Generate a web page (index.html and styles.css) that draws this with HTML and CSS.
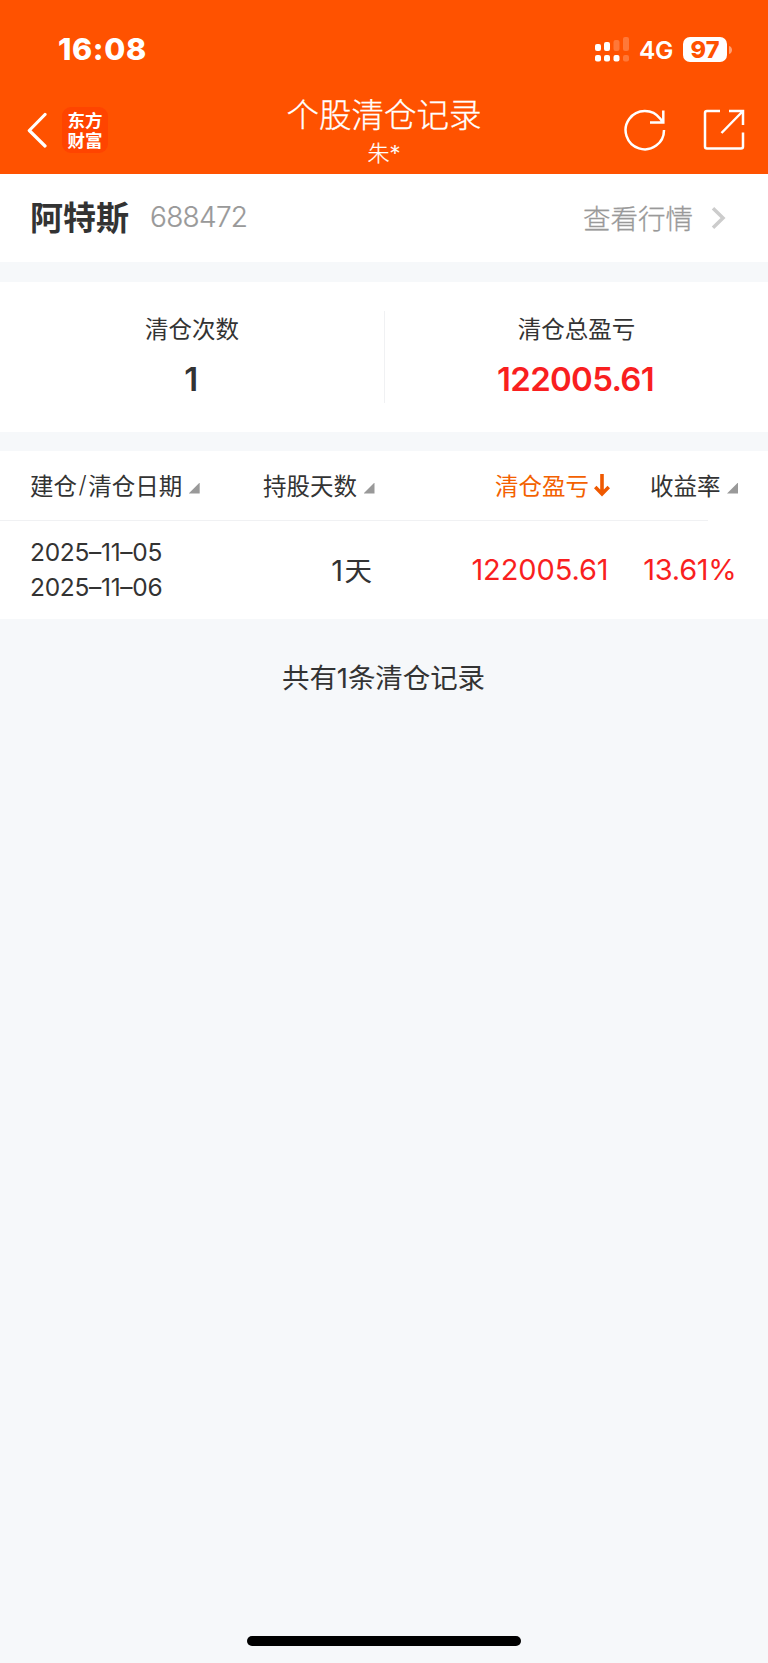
FILE: index.html
```html
<!DOCTYPE html>
<html lang="zh-CN">
<head>
<meta charset="utf-8">
<title>个股清仓记录</title>
<link rel="stylesheet" href="styles.css">
</head>
<body>
<header class="header">
  <div class="status">
    <span class="time">16:08</span>
    <div class="status-right">
      <svg class="signal" width="34" height="25" viewBox="0 0 34 25" fill="#fff">
        <rect x="0" y="7" width="6" height="7" rx="2"/><rect x="9" y="5" width="6" height="9" rx="2"/>
        <rect x="18.500" y="3" width="6" height="11" rx="2" opacity=".22"/><rect x="28" y="0" width="6" height="14" rx="2" opacity=".22"/>
        <rect x="0" y="18" width="6" height="6.500" rx="2"/><rect x="9" y="18" width="6" height="6.500" rx="2"/>
        <rect x="18.500" y="18" width="6" height="6.500" rx="2"/><rect x="28" y="18" width="6" height="6.500" rx="2" opacity=".22"/>
      </svg>
      <span class="network">4G</span>
      <span class="battery">97</span>
      <svg class="battery-cap" width="3" height="8" viewBox="0 0 3 8"><path d="M0 0C4 1 4 7 0 8Z" fill="#fff" opacity=".45"/></svg>
    </div>
  </div>
  <nav class="nav">
    <div class="nav-side">
      <svg width="22" height="36" viewBox="0 0 22 36" fill="none" stroke="#fff" stroke-width="3.200" stroke-linecap="round" stroke-linejoin="round"><path d="M18 2.500 2.300 18.500l15.700 15.500"/></svg>
      <div class="logo"><span>东方</span><span>财富</span></div>
    </div>
    <div class="titles">
      <h1 class="title">个股清仓记录</h1>
      <p class="subtitle">朱*</p>
    </div>
    <div class="nav-side nav-actions">
      <svg width="42" height="42" viewBox="0 0 42 42" fill="none" stroke="#fff" stroke-width="2.500"><path d="M40 21A19.200 19.200 0 1 1 36.300 9.800L39 13.500M39.300 1.500V13.500H26"/></svg>
      <svg width="42" height="42" viewBox="0 0 42 42" fill="none" stroke="#fff" stroke-width="2.500"><path d="M17 2H4Q2 2 2 4V37.500Q2 39.500 4 39.500H38Q40 39.500 40 37.500V23.500M26 2H40V16M40 2 18.500 24"/></svg>
    </div>
  </nav>
</header>
<section class="stock">
  <h2 class="stock-name">阿特斯</h2>
  <span class="stock-code">688472</span>
  <span class="quote-link">查看行情</span>
  <svg width="15" height="22" viewBox="0 0 15 22" fill="none" stroke="#ccc" stroke-width="3.500"><path d="M2 1.300 12 11 2 20.700"/></svg>
</section>
<section class="stats">
  <div class="stat"><span class="stat-label">清仓次数</span><strong class="stat-value">1</strong></div>
  <div class="stat stat-right"><span class="stat-label">清仓总盈亏</span><strong class="stat-value rise">122005.61</strong></div>
</section>
<section class="table">
  <div class="thead">
    <span class="th c1">建仓<span class="slash">/</span>清仓日期<i class="sort"></i></span>
    <span class="th c2">持股天数<i class="sort"></i></span>
    <span class="th c3 active">清仓盈亏<svg class="down" width="16" height="23" viewBox="0 0 16 23" fill="none" stroke="#ef5900" stroke-width="3.600"><path d="M8 0V20M1.200 13 8 20 14.800 13"/></svg></span>
    <span class="th c4">收益率<i class="sort"></i></span>
  </div>
  <div class="rule"></div>
  <div class="row">
    <div class="dates"><span>2025–11–05</span><span>2025–11–06</span></div>
    <span class="days"><span class="day-count">1</span>天</span>
    <span class="profit">122005.61</span>
    <span class="rate">13.61%</span>
  </div>
</section>
<p class="summary">共有1条清仓记录</p>
<div class="home-bar"></div>
</body>
</html>
```
FILE: styles.css
```css
* { box-sizing: border-box; }
body {
  margin: 0;
  width: 768px;
  height: 1663px;
  display: flex;
  flex-direction: column;
  background: #f6f8fa;
  color: #333;
  font-family: Inter, "Noto Sans CJK SC", sans-serif;
  white-space: nowrap;
}
h1, h2, p { margin: 0; font-weight: 400; }
svg { display: block; flex: none; }

.header { height: 173.500px; background: #ff5200; color: #fff; flex: none; }
.status { height: 87px; padding: 12px 36px 0 58px; display: flex; justify-content: space-between; align-items: center; }
.time { padding-bottom: 2px; font-size: 30.500px; font-weight: 800; letter-spacing: 0.600px; }
.status-right { display: flex; align-items: center; }
.network { margin-left: 10px; padding-top: 1px; width: 34px; font-size: 24.500px; font-weight: 600; letter-spacing: -0.200px; }
.battery { margin-left: 10px; width: 44px; height: 25px; border-radius: 7px; background: #fff; color: #ff5200; font-size: 23.500px; line-height: 25px; font-weight: 800; text-align: center; }
.battery-cap { margin-left: 2px; }

.nav { height: 86px; display: grid; grid-template-columns: 1fr auto 1fr; align-items: center; padding: 0 23px 0 27px; }
.nav-side { display: flex; align-items: center; gap: 13px; }
.nav-actions { justify-content: flex-end; gap: 37px; }
.logo { width: 46px; height: 46px; border-radius: 9px; background: #ff4400; display: flex; flex-direction: column; align-items: center; justify-content: center; padding-bottom: 1px; font: 700 17.500px/19.500px "Noto Sans CJK SC", sans-serif; }
.titles { text-align: center; padding: 3px 4px 0 0; }
.title { font-size: 32.500px; line-height: 42px; font-weight: 300; -webkit-text-stroke: 0.300px #fff; }
.subtitle { font-size: 22px; line-height: 32px; font-weight: 300; -webkit-text-stroke: 0.200px #fff; }

.stock { height: 88.500px; background: #fff; display: flex; align-items: center; padding: 0 42px 0 30px; flex: none; }
.stock-name { padding-bottom: 3px; font-size: 33px; font-weight: 700; }
.stock-code { margin-left: 21px; padding-bottom: 1px; font-size: 28px; font-weight: 300; color: #999; letter-spacing: -0.700px; -webkit-text-stroke: 0.200px #999; }
.quote-link { margin-left: auto; margin-right: 18px; padding-bottom: 2px; font-size: 27.500px; font-weight: 300; color: #999; -webkit-text-stroke: 0.300px #999; }

.stats { margin-top: 20px; height: 150px; background: #fff; display: grid; grid-template-columns: 1fr 1fr; align-items: center; flex: none; }
.stat { height: 92px; display: flex; flex-direction: column; align-items: center; }
.stat-right { border-left: 1px solid #f0f1f3; }
.stat-label { padding-top: 1px; font-size: 23.500px; line-height: 36px; }
.stat-value { margin-top: 10px; padding-right: 2px; font-size: 33px; line-height: 42px; font-weight: 600; letter-spacing: -0.700px; }
.rise { color: #f91f1f; }

.table { margin-top: 19px; height: 167.500px; background: #fff; flex: none; }
.thead { height: 69px; display: flex; align-items: center; padding: 0 0 2px 30px; font-size: 23.500px; }
.th { display: flex; align-items: center; }
.slash { padding: 0 1.500px; font-weight: 300; }
.c1 { width: 233px; }
.c2 { width: 232px; }
.c3 { width: 155px; }
.active { color: #f36100; }
.down { margin: 2px 0 0 5px; }
.sort { width: 11px; height: 11px; margin: 7px 0 0 6.500px; background: #999; clip-path: polygon(100% 0, 100% 100%, 0 100%); }
.rule { width: 708px; height: 1px; background: #f0f1f3; }
.row { height: 97px; display: flex; align-items: center; padding-left: 30px; }
.dates { width: 200px; display: flex; flex-direction: column; font-size: 24.500px; line-height: 34.400px; letter-spacing: -0.300px; }
.days { width: 142px; padding-bottom: 2px; text-align: right; font-size: 27.500px; }
.day-count { margin-right: 1.500px; font-size: 29px; }
.profit { width: 236.500px; text-align: right; letter-spacing: -0.100px; }
.rate { width: 128px; text-align: right; letter-spacing: -0.300px; }
.profit, .rate { color: #f91f1f; font-size: 29px; }

.summary { margin-top: 39px; padding-right: 1px; text-align: center; font-size: 27.500px; line-height: 40px; letter-spacing: -0.100px; }
.home-bar { width: 274px; height: 10px; border-radius: 5px; background: #000; margin: auto auto 17px; }
```
